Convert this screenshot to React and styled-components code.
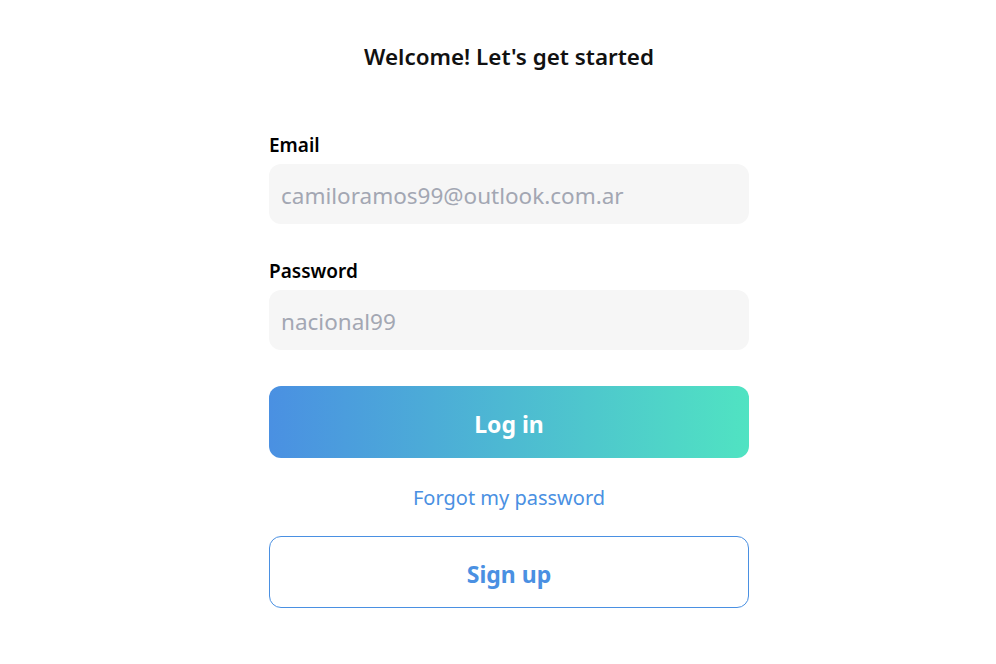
import React from 'react';
import styled, { createGlobalStyle } from 'styled-components';

const GlobalStyle = createGlobalStyle`
  body {
    margin: 0;
    background: #fff;
    font-family: "Noto Sans", "Open Sans", sans-serif;
  }
`;

const Page = styled.div`
  display: flex;
  justify-content: center;
  padding: 42px 0 0 22px;
`;

const Form = styled.form`
  width: 480px;
  display: flex;
  flex-direction: column;
`;

const Title = styled.h1`
  margin: 0 0 60px;
  text-align: center;
  font-size: 22.4px;
  font-weight: 600;
  line-height: 30px;
  color: #111;
`;

const Field = styled.label`
  display: flex;
  flex-direction: column;
  gap: 6px;
  margin-bottom: 34px;
`;

const LabelText = styled.span`
  font-size: 19px;
  font-weight: 600;
  line-height: 26px;
  color: #000;
`;

const Input = styled.input`
  height: 60px;
  box-sizing: border-box;
  border: none;
  border-radius: 12px;
  background: #f6f6f6;
  padding: 2px 12px 0;
  font-family: inherit;
  font-size: 22.5px;
  color: #333;
  outline: none;
  &::placeholder {
    color: #a3a7b3;
  }
`;

const Button = styled.button`
  height: 72px;
  box-sizing: border-box;
  padding: 4px 0 0;
  border-radius: 12px;
  font-family: inherit;
  font-size: 23px;
  font-weight: 700;
  cursor: pointer;
  border: ${(p) => (p.$outline ? '1px solid #4a90e2' : 'none')};
  background: ${(p) =>
    p.$outline ? '#fff' : 'linear-gradient(90deg, #4a90e2 0%, #50e3c2 100%)'};
  color: ${(p) => (p.$outline ? '#4a90e2' : '#fff')};
  margin-top: ${(p) => p.$top || 0}px;
`;

const Link = styled.a`
  margin: 26px 0 24px;
  text-align: center;
  font-size: 20px;
  line-height: 28px;
  color: #4a90e2;
  text-decoration: none;
  cursor: pointer;
`;

export default function App() {
  return (
    <>
      <GlobalStyle />
      <Page>
        <Form onSubmit={(e) => e.preventDefault()}>
          <Title>Welcome! Let's get started</Title>
          <Field>
            <LabelText>Email</LabelText>
            <Input type="email" placeholder="camiloramos99@outlook.com.ar" />
          </Field>
          <Field>
            <LabelText>Password</LabelText>
            <Input type="password" placeholder="nacional99" />
          </Field>
          <Button type="submit" $top={2}>Log in</Button>
          <Link>Forgot my password</Link>
          <Button type="button" $outline>Sign up</Button>
        </Form>
      </Page>
    </>
  );
}
